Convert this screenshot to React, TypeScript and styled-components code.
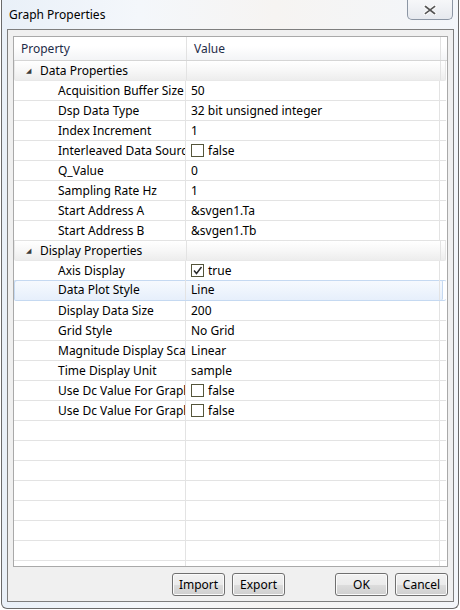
import styled, { createGlobalStyle } from "styled-components";

const GlobalStyle = createGlobalStyle`
  html, body {
    margin: 0;
    padding: 0;
    width: 460px;
    height: 610px;
    overflow: hidden;
    background: #ffffff;
  }
  * {
    box-sizing: border-box;
  }
`;

type Row =
  | { kind: "group"; label: string }
  | { kind: "prop"; label: string; value?: string; check?: boolean; selected?: boolean }
  | { kind: "empty" };

const ROWS: Row[] = [
  { kind: "group", label: "Data Properties" },
  { kind: "prop", label: "Acquisition Buffer Size", value: "50" },
  { kind: "prop", label: "Dsp Data Type", value: "32 bit unsigned integer" },
  { kind: "prop", label: "Index Increment", value: "1" },
  { kind: "prop", label: "Interleaved Data Source", value: "false", check: false },
  { kind: "prop", label: "Q_Value", value: "0" },
  { kind: "prop", label: "Sampling Rate Hz", value: "1" },
  { kind: "prop", label: "Start Address A", value: "&svgen1.Ta" },
  { kind: "prop", label: "Start Address B", value: "&svgen1.Tb" },
  { kind: "group", label: "Display Properties" },
  { kind: "prop", label: "Axis Display", value: "true", check: true },
  { kind: "prop", label: "Data Plot Style", value: "Line", selected: true },
  { kind: "prop", label: "Display Data Size", value: "200" },
  { kind: "prop", label: "Grid Style", value: "No Grid" },
  { kind: "prop", label: "Magnitude Display Scale", value: "Linear" },
  { kind: "prop", label: "Time Display Unit", value: "sample" },
  { kind: "prop", label: "Use Dc Value For Graph 1", value: "false", check: false },
  { kind: "prop", label: "Use Dc Value For Graph 2", value: "false", check: false },
  ...Array.from({ length: 8 }, () => ({ kind: "empty" as const })),
];

function CheckMark({ checked }: { checked: boolean }) {
  return (
    <S.CheckBox>
      {checked && (
        <svg width="11" height="11" viewBox="0 0 11 11">
          <path d="M2 5.5 L4.5 8.5 L9.5 2" fill="none" stroke="#2a2a2a" strokeWidth="1.5" />
        </svg>
      )}
    </S.CheckBox>
  );
}

function App() {
  return (
    <>
      <GlobalStyle />
      <S.Window>
        <S.TitleBar>
          <S.Title>Graph Properties</S.Title>
          <S.CloseButton>
            <svg width="14" height="10" viewBox="0 0 14 10">
              <path
                d="M2.5 1.5 L11.5 8.5 M11.5 1.5 L2.5 8.5"
                stroke="#ffffff"
                strokeWidth="3.4"
                strokeLinecap="square"
              />
              <path
                d="M2.5 1.5 L11.5 8.5 M11.5 1.5 L2.5 8.5"
                stroke="#555555"
                strokeWidth="1.6"
                strokeLinecap="square"
              />
            </svg>
          </S.CloseButton>
        </S.TitleBar>
        <S.Client>
          <S.Grid>
            <S.Header>
              <S.HeaderCell $name>Property</S.HeaderCell>
              <S.HeaderCell>Value</S.HeaderCell>
            </S.Header>
            <S.Body>
              {ROWS.map((row, i) => {
                if (row.kind === "group") {
                  return (
                    <S.GroupRow key={i}>
                      <S.NameCell>
                        <S.Expander>◢</S.Expander>
                        <S.Label>{row.label}</S.Label>
                      </S.NameCell>
                      <S.ValueCell />
                    </S.GroupRow>
                  );
                }
                if (row.kind === "empty") {
                  return (
                    <S.PropRow key={i}>
                      <S.NameCell />
                      <S.ValueCell />
                    </S.PropRow>
                  );
                }
                return (
                  <S.PropRow key={i} $selected={row.selected}>
                    <S.NameCell $indent>
                      <S.Label>{row.label}</S.Label>
                    </S.NameCell>
                    <S.ValueCell>
                      {row.check !== undefined && <CheckMark checked={row.check} />}
                      <S.Label>{row.value}</S.Label>
                    </S.ValueCell>
                  </S.PropRow>
                );
              })}
            </S.Body>
          </S.Grid>
          <S.ButtonBar>
            <S.ButtonGroup>
              <S.Button>Import</S.Button>
              <S.Button>Export</S.Button>
            </S.ButtonGroup>
            <S.ButtonGroup>
              <S.Button>OK</S.Button>
              <S.Button>Cancel</S.Button>
            </S.ButtonGroup>
          </S.ButtonBar>
        </S.Client>
      </S.Window>
    </>
  );
}

export default App;

const FONT = `"Noto Sans", "Open Sans", "Liberation Sans", sans-serif`;

const S = {
  Window: styled.div`
    margin-left: 1px;
    width: 458px;
    height: 609px;
    display: flex;
    flex-direction: column;
    padding: 0 4px 6px 5px;
    border: 1px solid #6a6a6a;
    border-top: none;
    border-radius: 0 0 6px 6px;
    background: linear-gradient(90deg, #e9f0f8 0%, #f4f7fb 30%, #f6f4f2 60%, #f3f6fa 100%);
    font-family: ${FONT};
  `,

  TitleBar: styled.div`
    height: 29px;
    display: flex;
    justify-content: space-between;
    align-items: flex-start;
  `,

  Title: styled.div`
    padding: 6px 0 0 2px;
    font-size: 12px;
    color: #000;
    line-height: 18px;
  `,

  CloseButton: styled.div`
    width: 46px;
    height: 20px;
    margin-right: 1px;
    display: flex;
    align-items: center;
    justify-content: center;
    border: 1px solid #8c96a4;
    border-top: none;
    border-radius: 0 0 5px 5px;
    background: linear-gradient(#f6f7f9, #e6e9ee);
  `,

  Client: styled.div`
    flex: 1;
    display: flex;
    flex-direction: column;
    padding: 6px 5px 5px 5px;
    border: 1px solid #7e7e7e;
    background: #f0f0f0;
  `,

  Grid: styled.div`
    height: 531px;
    display: flex;
    flex-direction: column;
    border: 1px solid #a9a9a9;
    background: #ffffff;
    overflow: hidden;
  `,

  Header: styled.div`
    height: 24px;
    flex-shrink: 0;
    display: flex;
    padding-right: 6px;
    border-bottom: 1px solid #d5d5d5;
    background: linear-gradient(#ffffff 0%, #ffffff 40%, #f3f4f6 100%);
  `,

  HeaderCell: styled.div<{ $name?: boolean }>`
    width: ${(p) => (p.$name ? "173px" : "254px")};
    padding-left: 7px;
    display: flex;
    align-items: center;
    border-right: 1px solid #e2e2e2;
    font-size: 12px;
    color: #1e2c48;
  `,

  Body: styled.div`
    flex: 1;
    display: flex;
    flex-direction: column;
    padding-right: 1px;
  `,

  GroupRow: styled.div`
    height: 20px;
    flex-shrink: 0;
    display: flex;
    border: 1px solid #e8e8e8;
    border-top: none;
    border-radius: 0 0 2px 2px;
    background: linear-gradient(#ffffff 0%, #f7f7f7 50%, #ededed 100%);
  `,

  PropRow: styled.div<{ $selected?: boolean }>`
    height: 20px;
    flex-shrink: 0;
    display: flex;
    border-bottom: 1px solid #e3e3e3;
    ${(p) =>
      p.$selected &&
      `
      margin-top: -1px;
      height: 21px;
      border-bottom-color: #c5d9f1;
      border-radius: 2px;
      box-shadow: inset 1px 1px 0 #c5d9f1, inset -3px 0 0 #ffffff, inset -4px 0 0 #c5d9f1;
      background: linear-gradient(#f7fafe, #e6effb);
    `}
  `,

  NameCell: styled.div<{ $indent?: boolean }>`
    width: 172px;
    flex-shrink: 0;
    display: flex;
    align-items: center;
    padding-left: ${(p) => (p.$indent ? "44px" : "11px")};
    border-right: 1px solid #e3e3e3;
    overflow: hidden;
    white-space: nowrap;
  `,

  ValueCell: styled.div`
    width: 254px;
    flex-shrink: 0;
    display: flex;
    align-items: center;
    gap: 4px;
    padding-left: 5px;
    border-right: 1px solid #e3e3e3;
    overflow: hidden;
    white-space: nowrap;
  `,

  Expander: styled.span`
    width: 14px;
    font-size: 7px;
    color: #3c3c3c;
    line-height: 1;
  `,

  Label: styled.span`
    font-size: 12px;
    color: #000;
    line-height: 16px;
  `,

  CheckBox: styled.span`
    width: 13px;
    height: 13px;
    flex-shrink: 0;
    display: flex;
    align-items: center;
    justify-content: center;
    border: 1px solid #55553a;
    background: #ffffff;
  `,

  ButtonBar: styled.div`
    display: flex;
    justify-content: space-between;
    padding: 6px 0 0 159px;
  `,

  ButtonGroup: styled.div`
    display: flex;
    gap: 7px;
  `,

  Button: styled.button`
    width: 53px;
    height: 23px;
    padding: 0;
    border: 1px solid #707070;
    border-radius: 3px;
    background: linear-gradient(#f2f2f2 0%, #ebebeb 50%, #dddddd 51%, #cfcfcf 100%);
    box-shadow: inset 0 0 0 1px #fbfbfb;
    font-family: ${FONT};
    font-size: 12px;
    color: #000;
  `,
};
